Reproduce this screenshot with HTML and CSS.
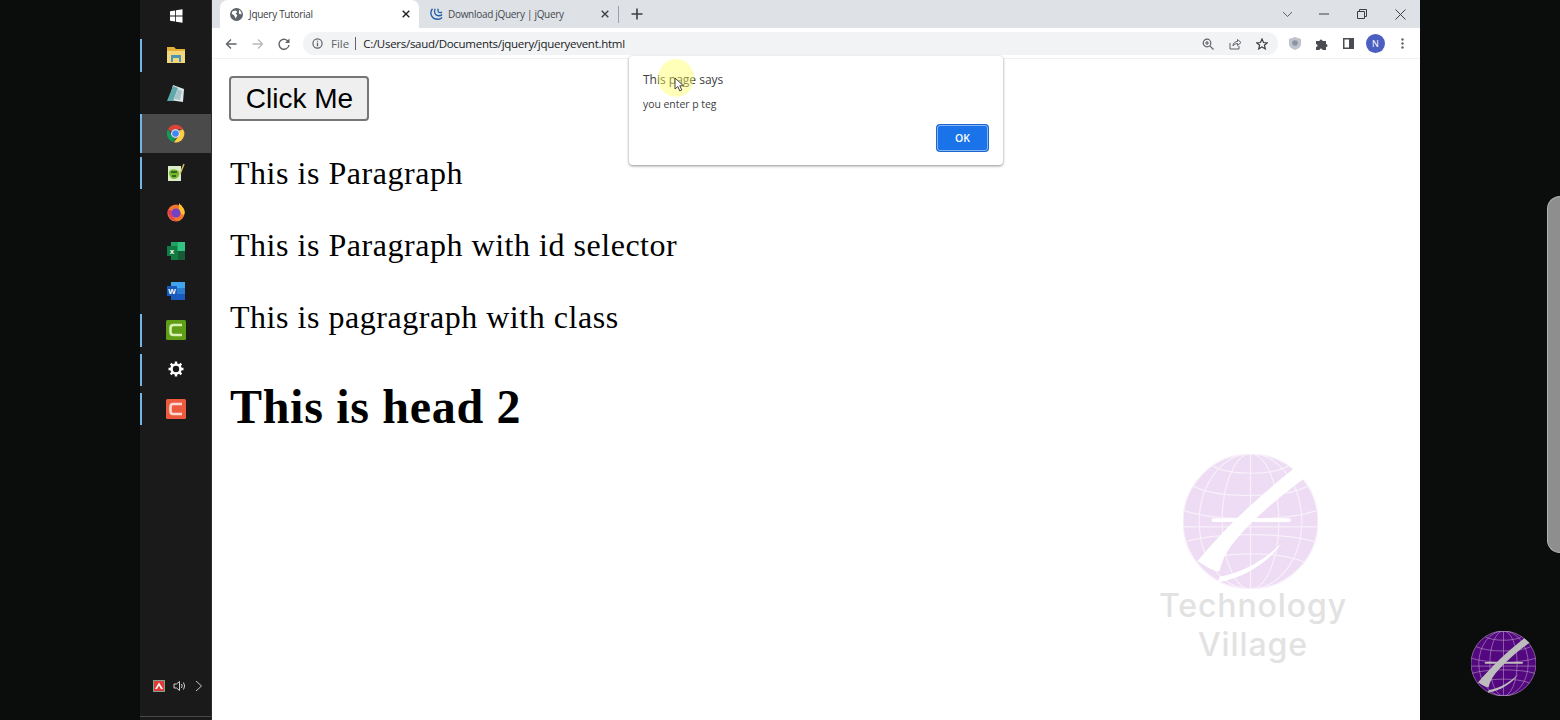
FILE: index.html
```html
<!DOCTYPE html>
<html lang="en">
<head>
<meta charset="utf-8">
<title>Jquery Tutorial</title>
<link rel="stylesheet" href="styles.css">
</head>
<body>
<svg class="defs" width="0" height="0" aria-hidden="true">
  <symbol id="globe" viewBox="0 0 100 100">
    <circle class="g-fill" cx="50" cy="50" r="50"/>
    <g class="g-grid" fill="none">
      <ellipse cx="50" cy="50" rx="50" ry="50"/>
      <ellipse cx="50" cy="50" rx="38" ry="50"/>
      <ellipse cx="50" cy="50" rx="21" ry="50"/>
      <path d="M50 0V100"/>
      <path d="M1 54H99"/>
      <path d="M22 9C35 16 65 16 78 9"/>
      <path d="M8 24C25 33 75 33 92 24"/>
      <path d="M1 42C25 50 75 50 99 42"/>
      <path d="M2 65C25 58 75 58 98 65"/>
      <path d="M10 80C30 72 70 72 90 80"/>
    </g>
    <g class="g-mark">
      <path d="M82 11L90 18C68 34 44 55 33 72C30 77 28 82 27 87C21 86 16 83 11 79C30 56 55 32 82 11Z"/>
      <path d="M73 66C64 80 45 92 26 95L27 91C44 88 60 79 73 66Z"/>
      <rect x="21" y="47.500" width="59" height="2.800" rx="1.400"/>
    </g>
  </symbol>
</svg>

<div class="screen">
  <div class="side-black"></div>

  <aside class="taskbar">
    <div class="task-list">
      <div class="task task-start">
        <svg class="ic" width="16" height="16" viewBox="0 0 16 16"><path fill="#fff" d="M2 3.200L7.200 2.400V7.600H2ZM8 2.300L14.500 1.300V7.600H8ZM2 8.400H7.200V13.600L2 12.800ZM8 8.400H14.500V14.700L8 13.700Z"/></svg>
      </div>
      <div class="task run">
        <svg class="ic" width="20" height="20" viewBox="0 0 20 20"><path fill="#e3b13a" d="M1 2H8L10 4H19V18H1Z"/><path fill="#f6d67a" d="M1 6H19V18H1Z"/><path fill="#4d93b8" d="M5 10H15V17H13V13H7V17H5Z"/></svg>
      </div>
      <div class="task">
        <svg class="ic" width="20" height="20" viewBox="0 0 20 20"><path fill="#dfe8ea" d="M7 1L18 5L17 18L3 16Z"/><path fill="#5fa9ad" d="M7 2L12 4L7 17L1 17Z"/><path fill="#a9c4c8" d="M12 5L16 7L14 16L8 15Z"/></svg>
      </div>
      <div class="task run active">
        <svg class="ic" width="19" height="19" viewBox="0 0 48 48"><path fill="#db4437" d="M24 2A22 22 0 0 1 43 13H24A11 11 0 0 0 14 19L5 13A22 22 0 0 1 24 2Z"/><path fill="#0f9d58" d="M5 13L15 30A11 11 0 0 0 26 35L18 45A22 22 0 0 1 5 13Z"/><path fill="#ffcd40" d="M43 13A22 22 0 0 1 20 46L32 30A11 11 0 0 0 33 17Z"/><circle cx="24" cy="24" r="11" fill="#fff"/><circle cx="24" cy="24" r="8.500" fill="#4285f4"/></svg>
      </div>
      <div class="task run">
        <svg class="ic" width="20" height="20" viewBox="0 0 20 20"><path fill="#dcebc8" d="M2 3H15V18H2Z"/><path fill="#7cb62f" d="M3 9C5 5 11 6 13 9C14 12 12 16 8 16C5 16 3 13 3 9Z"/><path fill="#2f6b1c" d="M5 8H11V10H5ZM6 12H10V14H6Z"/><path stroke="#d2bd57" stroke-width="1.500" d="M14 11L18 1"/></svg>
      </div>
      <div class="task">
        <svg class="ic" width="20" height="20" viewBox="0 0 20 20"><circle cx="10" cy="11" r="8.600" fill="#f2762e"/><path fill="#ffbf2e" d="M13 1C16 4 19 7 18.600 11C18 15 15 12 13 9Z"/><path fill="#e53e5a" d="M2 7C1 13 5 19 11 19C7 17 5 13 6 9Z"/><circle cx="10" cy="11" r="4.600" fill="#7542c4"/></svg>
      </div>
      <div class="task">
        <svg class="ic" width="20" height="20" viewBox="0 0 20 20"><path fill="#21a366" d="M5 1H19V10H5Z"/><path fill="#107c41" d="M5 10H19V19H5Z"/><path fill="#33c481" d="M12 1H19V10H12Z"/><path fill="#185c37" d="M12 10H19V19H12Z"/><rect x="1" y="5" width="10" height="10" fill="#107c41"/><text class="tile-letter" x="6" y="13">x</text></svg>
      </div>
      <div class="task">
        <svg class="ic" width="20" height="20" viewBox="0 0 20 20"><path fill="#41a5ee" d="M5 1H19V7H5Z"/><path fill="#2b7cd3" d="M5 7H19V13H5Z"/><path fill="#185abd" d="M5 13H19V19H5Z"/><rect x="1" y="5" width="10" height="10" fill="#185abd"/><text class="tile-letter" x="6" y="13">W</text></svg>
      </div>
      <div class="task run">
        <svg class="ic" width="20" height="20" viewBox="0 0 20 20"><rect width="20" height="20" rx="1.500" fill="#5f9e16"/><path fill="none" stroke="#d5f0b0" stroke-width="2.600" d="M16 5H7.500Q4.500 5 4.500 8V12Q4.500 15 7.500 15H16"/></svg>
      </div>
      <div class="task run">
        <svg class="ic" width="16" height="16" viewBox="0 0 16 16"><circle cx="8" cy="8" r="4.500" fill="none" stroke="#fff" stroke-width="2.600"/><g stroke="#fff" stroke-width="2.400"><path d="M8 .5V3.500M8 12.500V15.500M.5 8H3.500M12.500 8H15.500M2.700 2.700L4.800 4.800M11.200 11.200L13.300 13.300M13.300 2.700L11.200 4.800M4.800 11.200L2.700 13.300"/></g></svg>
      </div>
      <div class="task run">
        <svg class="ic" width="20" height="20" viewBox="0 0 20 20"><rect width="20" height="20" rx="1.500" fill="#ee5a3f"/><path fill="none" stroke="#fbd9d0" stroke-width="2.600" d="M16 5H7Q4.500 5 4.500 8V12Q4.500 15 7 15H16"/></svg>
      </div>
    </div>
    <div class="tray">
      <svg width="12" height="12" viewBox="0 0 12 12"><rect x=".5" y=".5" width="11" height="11" fill="#e03a3a" stroke="#7fa08a"/><path fill="#fff" d="M6 2.500L10 9H8L6 5.500L4 9H2Z"/></svg>
      <svg width="14" height="12" viewBox="0 0 14 12"><path fill="none" stroke="#cfcfcf" d="M1 4H3.500L6.500 1.500V10.500L3.500 8H1ZM8.500 4Q9.800 6 8.500 8M10.500 2.500Q12.800 6 10.500 9.500"/></svg>
      <svg width="8" height="12" viewBox="0 0 8 12"><path fill="none" stroke="#c9c9c9" d="M1 1L6.500 6L1 11"/></svg>
    </div>
  </aside>

  <main class="browser">
    <div class="tabstrip">
      <div class="tab tab-active">
        <svg width="13" height="13" viewBox="0 0 16 16"><circle cx="8" cy="8" r="8" fill="#5f6368"/><path fill="#fff" d="M3 4L7 3L9 5L7 7L9 9L7 13L5 9L2 7ZM11 2L14 5V8L11 7Z"/></svg>
        <span class="tab-title">Jquery Tutorial</span>
        <svg class="tab-x" width="8" height="8" viewBox="0 0 8 8"><path stroke="#202124" stroke-width="1.400" d="M.7 .7L7.300 7.300M7.300 .7L.7 7.300"/></svg>
      </div>
      <div class="tab tab-inactive">
        <svg width="14" height="14" viewBox="0 0 16 16"><path fill="none" stroke="#1f5fa8" stroke-width="1.500" d="M4 2C0 7 3 14 10 14C12 14 14 13 15 12M7 2C5 6 7 10 11 10C12.500 10 14 9.500 15 8.500M10.500 2C9.500 4.500 11 6.500 13 6.500L15 6"/></svg>
        <span class="tab-title dim">Download jQuery | jQuery</span>
        <svg class="tab-x" width="8" height="8" viewBox="0 0 8 8"><path stroke="#3c4043" stroke-width="1.400" d="M.7 .7L7.300 7.300M7.300 .7L.7 7.300"/></svg>
      </div>
      <span class="tab-sep"></span>
      <svg class="new-tab" width="12" height="12" viewBox="0 0 12 12"><path stroke="#3c4043" stroke-width="1.600" d="M6 .5V11.500M.5 6H11.500"/></svg>
      <div class="win-ctrls">
        <svg width="11" height="7" viewBox="0 0 11 7"><path fill="none" stroke="#5f6368" d="M1 1L5.500 5.500L10 1"/></svg>
        <svg class="win-min" width="10" height="2" viewBox="0 0 10 2"><path stroke="#3c4043" d="M0 1H10"/></svg>
        <svg class="win-max" width="10" height="10" viewBox="0 0 10 10"><path fill="none" stroke="#3c4043" d="M.5 2.500H7.500V9.500H.5ZM2.500 2.500V.5H9.500V7.500H7.500"/></svg>
        <svg class="win-close" width="11" height="11" viewBox="0 0 11 11"><path stroke="#3c4043" d="M.5 .5L10.500 10.500M10.500 .5L.5 10.500"/></svg>
      </div>
    </div>

    <div class="toolbar">
      <div class="nav">
        <svg width="12" height="12" viewBox="0 0 12 12"><path fill="none" stroke="#5f6368" stroke-width="1.400" d="M11.500 6H1.500M6 1.500L1.500 6L6 10.500"/></svg>
        <svg width="12" height="12" viewBox="0 0 12 12"><path fill="none" stroke="#b8bbbf" stroke-width="1.400" d="M.5 6H10.500M6 1.500L10.500 6L6 10.500"/></svg>
        <svg width="12" height="12" viewBox="0 0 12 12"><path fill="none" stroke="#5f6368" stroke-width="1.400" d="M10.500 4A5 5 0 1 0 11 7"/><path fill="#5f6368" d="M11.500 .5V5H7Z"/></svg>
      </div>
      <div class="omnibox">
        <svg width="11" height="11" viewBox="0 0 12 12"><circle cx="6" cy="6" r="5" fill="none" stroke="#5f6368" stroke-width="1.300"/><path stroke="#5f6368" stroke-width="1.400" d="M6 5.200V9M6 3V4.200"/></svg>
        <span class="scheme">File</span>
        <span class="scheme-sep"></span>
        <span class="url">C:/Users/saud/Documents/jquery/jqueryevent.html</span>
        <div class="omni-actions">
          <svg width="12" height="12" viewBox="0 0 12 12"><circle cx="5" cy="5" r="3.800" fill="none" stroke="#5f6368" stroke-width="1.200"/><path stroke="#5f6368" stroke-width="1.200" d="M7.800 7.800L11.500 11.500M3 5H7M5 3V7"/></svg>
          <svg width="13" height="12" viewBox="0 0 13 12"><path fill="none" stroke="#5f6368" d="M1 5V11H10V8M4 8C4 5 6 3.500 8.500 3.500V1.500L12 4.500L8.500 7.500V5.500C6.500 5.500 5 6.500 4 8Z"/></svg>
          <svg width="12" height="12" viewBox="0 0 12 12"><path fill="none" stroke="#3c4043" stroke-width="1.200" d="M6 1L7.500 4.500L11.200 4.800L8.400 7.200L9.300 10.900L6 9L2.700 10.900L3.600 7.200L.8 4.800L4.500 4.500Z"/></svg>
        </div>
      </div>
      <div class="extensions">
        <svg width="12" height="13" viewBox="0 0 12 13"><path fill="#bfc3cc" d="M6 0L12 2V7C12 10 9 12 6 13C3 12 0 10 0 7V2Z"/><circle cx="6" cy="6" r="2.800" fill="#8c93a3"/></svg>
        <svg width="12" height="12" viewBox="0 0 12 12"><path fill="#494c50" d="M0 3H3.500A1.500 1.500 0 1 1 6.500 3H10V6A1.500 1.500 0 1 1 10 9V12H6.500A1.500 1.500 0 1 0 3.500 12H0V9A1.500 1.500 0 1 0 0 6Z"/></svg>
        <svg width="11" height="11" viewBox="0 0 11 11"><rect x=".75" y=".75" width="9.500" height="9.500" fill="#fff" stroke="#494c50" stroke-width="1.500"/><rect x="6" y="1" width="4" height="9" fill="#494c50"/></svg>
        <span class="avatar">N</span>
        <svg width="3" height="11" viewBox="0 0 3 11"><circle cx="1.500" cy="1.500" r="1.200" fill="#5f6368"/><circle cx="1.500" cy="5.500" r="1.200" fill="#5f6368"/><circle cx="1.500" cy="9.500" r="1.200" fill="#5f6368"/></svg>
      </div>
    </div>

    <div class="page">
      <button class="click-btn" type="button">Click Me</button>
      <p class="para para-first">This is Paragraph</p>
      <p class="para">This is Paragraph with id selector</p>
      <p class="para">This is pagragraph with class</p>
      <h2 class="head">This is head 2</h2>
    </div>

    <div class="dialog">
      <div class="dialog-title">This page says</div>
      <div class="dialog-msg">you enter p teg</div>
      <div class="dialog-actions"><span class="ok-btn">OK</span></div>
    </div>
    <div class="cursor-halo"></div>
    <svg class="cursor" width="11" height="15" viewBox="0 0 11 15"><path fill="#fff" stroke="#444" d="M1 1V12L3.800 9.500L5.800 14L7.800 13L5.800 8.800H9.500Z"/></svg>

    <div class="watermark">
      <svg class="wm-globe" width="135" height="135"><use href="#globe"/></svg>
      <div class="wm-text">Technology<br>Village</div>
    </div>
  </main>

  <div class="side-black side-right">
    <div class="edge-panel"></div>
    <svg class="corner-logo" width="65" height="65"><use href="#globe"/></svg>
  </div>
</div>
</body>
</html>
```

FILE: styles.css
```css
* { box-sizing: border-box; }
html, body { margin: 0; height: 100%; overflow: hidden; background: #000; }
.defs { position: absolute; }
.screen { display: flex; width: 1560px; height: 720px; }
.side-black { width: 140px; flex: none; background: #0b0c0c; }
.side-right { position: relative; }

/* Taskbar */
.taskbar { width: 72px; flex: none; background: #1a1a1a; display: flex; flex-direction: column; justify-content: space-between; border-right: 1px solid #2c2c2c; }
.task-list { display: flex; flex-direction: column; }
.task { height: 39.3px; display: flex; align-items: center; justify-content: center; position: relative; }
.task-start { height: 32px; margin-bottom: 3.300px; }
.task.run::before { content: ""; position: absolute; left: 0; top: 4px; bottom: 3px; width: 2px; background: #76b4e4; }
.task.active { background: #4a4a4a; }
.task.active::before { top: 0; bottom: 0; }
.ic { display: block; }
.tile-letter { font: 700 8px "Liberation Sans", sans-serif; fill: #fff; text-anchor: middle; }
.tray { height: 60px; display: flex; align-items: flex-start; justify-content: center; gap: 8px; padding: 23px 0 0 4px; border-bottom: 1px solid #4a4a4a; margin-bottom: 3px; }

/* Browser */
.browser { width: 1208px; flex: none; position: relative; background: #fff; display: flex; flex-direction: column; font-family: "Open Sans", sans-serif; }
.tabstrip { height: 28px; flex: none; background: #dee1e6; display: flex; align-items: center; padding-left: 8px; }
.tab { width: 199px; height: 28px; flex: none; display: flex; align-items: center; gap: 6px; padding: 0 9px 0 10px; border-radius: 8px 8px 0 0; }
.tab-active { background: #fff; }
.tab-inactive { gap: 5px; }
.tab-title { flex: 1; font-size: 10px; letter-spacing: -.3px; color: #3c4043; white-space: nowrap; }
.tab-title.dim { color: #45494e; }
.tab-x { flex: none; }
.tab-sep { width: 1px; height: 17px; background: #9aa0a6; flex: none; }
.new-tab { margin-left: 12px; flex: none; }
.win-ctrls { margin-left: auto; display: flex; align-items: center; padding-right: 14px; }
.win-min { margin-left: 26px; }
.win-max { margin-left: 28px; }
.win-close { margin-left: 28px; }

.toolbar { height: 31px; flex: none; background: #fff; border-bottom: 1px solid #f0f1f2; display: flex; align-items: center; padding: 1px 0 0 13px; }
.nav { display: flex; align-items: center; gap: 14.500px; width: 78px; flex: none; }
.omnibox { width: 975px; height: 23px; flex: none; background: #f1f3f4; border-radius: 12px; display: flex; align-items: center; padding: 0 10px 0 9px; font-size: 11.500px; }
.scheme { color: #5f6368; margin-left: 8px; }
.scheme-sep { width: 1px; height: 13px; background: #5f6368; margin: 0 7px 0 6px; }
.url { color: #202124; letter-spacing: -.28px; }
.omni-actions { margin-left: auto; display: flex; align-items: center; gap: 14.500px; }
.extensions { display: flex; align-items: center; margin-left: 11px; gap: 15px; }
.avatar { width: 19px; height: 19px; margin: 0 1px 0 -3px; border-radius: 50%; background: #4b5fc0; color: #fff; font-size: 9px; display: flex; align-items: center; justify-content: center; }

.page { flex: 1; padding: 17px 16px 0 17px; font-family: "Liberation Serif", serif; color: #000; }
.click-btn { display: block; height: 45px; width: 140px; padding: 0 0 0 1px; font: 28px "Liberation Sans", sans-serif; color: #000; background: #efefef; border: 2px solid #767676; border-radius: 4px; }
.para { margin: 36px 0 0 1px; font-size: 32px; line-height: 36px; letter-spacing: .53px; }
.para-first { margin-top: 34px; }
.head { margin: 44px 0 0 1px; font-size: 48px; line-height: 55px; font-weight: 700; letter-spacing: .7px; }

/* Dialog */
.dialog { position: absolute; left: 417px; top: 56px; width: 374px; height: 109px; background: #fff; border-radius: 4px; box-shadow: 0 1px 3px rgba(0,0,0,.45); padding: 15px 14px 0; color: #3c4043; }
.dialog-title { font-size: 12px; line-height: 17px; }
.dialog-msg { font-size: 10.400px; line-height: 14px; margin-top: 9px; }
.dialog-actions { display: flex; justify-content: flex-end; margin-top: 14px; padding-right: 1px; }
.ok-btn { width: 51px; height: 26px; background: #1a73e8; color: #fff; font-size: 10.500px; font-weight: 600; display: flex; align-items: center; justify-content: center; border-radius: 3px; border: 1px solid #8ab4f0; box-shadow: 0 0 0 1px #1a67d4; }
.cursor-halo { position: absolute; left: 446px; top: 59px; width: 36px; height: 38px; border-radius: 50%; background: rgba(255,255,90,.42); }
.cursor { position: absolute; left: 462px; top: 77px; }

/* Watermark */
.watermark { position: absolute; left: 940px; top: 454px; width: 200px; text-align: center; }
.wm-globe { display: block; margin-left: 31px; --g: #eddcf3; --l: #f8f0fa; --m: #fff; }
.wm-text { font-family: Inter, sans-serif; font-size: 32px; line-height: 39px; font-weight: 500; letter-spacing: .9px; color: #e2e2e2; margin: -3px 0 0 2px; white-space: nowrap; }
.corner-logo { position: absolute; left: 51px; top: 631px; --g: #54087f; --l: #b69ac8; --m: #bdbdbd; }
.g-fill { fill: var(--g); }
.g-grid { stroke: var(--l); stroke-width: .9; }
.g-mark { fill: var(--m); }

.edge-panel { position: absolute; left: 127px; top: 196px; width: 13px; height: 357px; background: #8e8e8e; border: 1px solid #b4b4b4; border-right: 0; border-radius: 16px 0 0 16px; }
```
